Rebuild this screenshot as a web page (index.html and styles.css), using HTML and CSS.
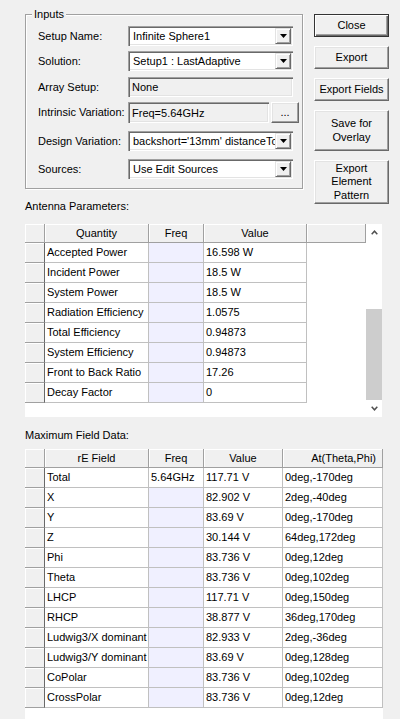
FILE: index.html
```html
<!DOCTYPE html>
<html>
<head>
<meta charset="utf-8">
<title>Antenna Parameters</title>
<link rel="stylesheet" href="styles.css">
</head>
<body>
<div class="top">
  <fieldset class="inputs">
    <legend>Inputs</legend>
    <div class="form">
      <div class="row">
        <span class="lbl">Setup Name:</span>
        <div class="combo"><span class="val">Infinite Sphere1</span><span class="drop"><svg width="7" height="4" viewBox="0 0 7 4"><polygon points="0,0 7,0 3.5,4" fill="#000"/></svg></span></div>
      </div>
      <div class="row">
        <span class="lbl">Solution:</span>
        <div class="combo"><span class="val">Setup1 : LastAdaptive</span><span class="drop"><svg width="7" height="4" viewBox="0 0 7 4"><polygon points="0,0 7,0 3.5,4" fill="#000"/></svg></span></div>
      </div>
      <div class="row mt1">
        <span class="lbl">Array Setup:</span>
        <div class="field ro"><span class="val">None</span></div>
      </div>
      <div class="row tall">
        <span class="lbl">Intrinsic Variation:</span>
        <div class="field ro short"><span class="val">Freq=5.64GHz</span></div>
        <div class="btn dots">...</div>
      </div>
      <div class="row mt3">
        <span class="lbl">Design Variation:</span>
        <div class="combo"><span class="val">backshort='13mm' distanceToSource</span><span class="drop"><svg width="7" height="4" viewBox="0 0 7 4"><polygon points="0,0 7,0 3.5,4" fill="#000"/></svg></span></div>
      </div>
      <div class="row mt3">
        <span class="lbl">Sources:</span>
        <div class="combo"><span class="val">Use Edit Sources</span><span class="drop"><svg width="7" height="4" viewBox="0 0 7 4"><polygon points="0,0 7,0 3.5,4" fill="#000"/></svg></span></div>
      </div>
    </div>
  </fieldset>
  <div class="buttons">
    <div class="btn default b1">Close</div>
    <div class="btn b1">Export</div>
    <div class="btn b1">Export Fields</div>
    <div class="btn multi b2"><span>Save for</span><span>Overlay</span></div>
    <div class="btn multi b3"><span>Export</span><span>Element</span><span>Pattern</span></div>
  </div>
  <div class="section-label first">Antenna Parameters:</div>
</div>

<div class="grid-wrap g1">
  <div class="grid grid1">
    <div class="c h"></div><div class="c h">Quantity</div><div class="c h">Freq</div><div class="c h">Value</div><div class="c h"></div>

    <div class="c rh"></div><div class="c">Accepted Power</div><div class="c f"></div><div class="c">16.598 W</div><div class="blank"></div>
    <div class="c rh"></div><div class="c">Incident Power</div><div class="c f"></div><div class="c">18.5 W</div><div class="blank"></div>
    <div class="c rh"></div><div class="c">System Power</div><div class="c f"></div><div class="c">18.5 W</div><div class="blank"></div>
    <div class="c rh"></div><div class="c">Radiation Efficiency</div><div class="c f"></div><div class="c">1.0575</div><div class="blank"></div>
    <div class="c rh"></div><div class="c">Total Efficiency</div><div class="c f"></div><div class="c">0.94873</div><div class="blank"></div>
    <div class="c rh"></div><div class="c">System Efficiency</div><div class="c f"></div><div class="c">0.94873</div><div class="blank"></div>
    <div class="c rh"></div><div class="c">Front to Back Ratio</div><div class="c f"></div><div class="c">17.26</div><div class="blank"></div>
    <div class="c rh"></div><div class="c">Decay Factor</div><div class="c f"></div><div class="c">0</div><div class="blank"></div>
  </div>
  <div class="vscroll">
    <div class="sarrow"><svg width="7" height="5" viewBox="0 0 7 5"><polyline points="0.7,4.2 3.5,1.2 6.3,4.2" fill="none" stroke="#505050" stroke-width="1.5"/></svg></div>
    <div class="strack"><div class="sthumb"></div></div>
    <div class="sarrow"><svg width="7" height="5" viewBox="0 0 7 5"><polyline points="0.7,0.8 3.5,3.8 6.3,0.8" fill="none" stroke="#505050" stroke-width="1.5"/></svg></div>
  </div>
</div>

<div class="section-label second">Maximum Field Data:</div>

<div class="grid-wrap g2">
  <div class="grid grid2">
    <div class="c h"></div><div class="c h">rE Field</div><div class="c h">Freq</div><div class="c h">Value</div><div class="c h right">At(Theta,Phi)</div>

    <div class="c rh"></div><div class="c">Total</div><div class="c">5.64GHz</div><div class="c">117.71 V</div><div class="c">0deg,-170deg</div>
    <div class="c rh"></div><div class="c">X</div><div class="c f"></div><div class="c">82.902 V</div><div class="c">2deg,-40deg</div>
    <div class="c rh"></div><div class="c">Y</div><div class="c f"></div><div class="c">83.69 V</div><div class="c">0deg,-170deg</div>
    <div class="c rh"></div><div class="c">Z</div><div class="c f"></div><div class="c">30.144 V</div><div class="c">64deg,172deg</div>
    <div class="c rh"></div><div class="c">Phi</div><div class="c f"></div><div class="c">83.736 V</div><div class="c">0deg,12deg</div>
    <div class="c rh"></div><div class="c">Theta</div><div class="c f"></div><div class="c">83.736 V</div><div class="c">0deg,102deg</div>
    <div class="c rh"></div><div class="c">LHCP</div><div class="c f"></div><div class="c">117.71 V</div><div class="c">0deg,150deg</div>
    <div class="c rh"></div><div class="c">RHCP</div><div class="c f"></div><div class="c">38.877 V</div><div class="c">36deg,170deg</div>
    <div class="c rh"></div><div class="c">Ludwig3/X dominant</div><div class="c f"></div><div class="c">82.933 V</div><div class="c">2deg,-36deg</div>
    <div class="c rh"></div><div class="c">Ludwig3/Y dominant</div><div class="c f"></div><div class="c">83.69 V</div><div class="c">0deg,128deg</div>
    <div class="c rh"></div><div class="c">CoPolar</div><div class="c f"></div><div class="c">83.736 V</div><div class="c">0deg,102deg</div>
    <div class="c rh"></div><div class="c">CrossPolar</div><div class="c f"></div><div class="c">83.736 V</div><div class="c">0deg,12deg</div>
  </div>
</div>
</body>
</html>
```

FILE: styles.css
```css
* { box-sizing: border-box; }
html, body { margin: 0; height: 719px; overflow: hidden; }
body {
  width: 400px;
  background: #f0f0f0;
  color: #000;
  font: 11px/13px "Liberation Sans", Arial, sans-serif;
}

/* top area */
.top {
  display: grid;
  grid-template-columns: 278px 75px;
  grid-template-rows: auto auto;
  column-gap: 11px;
  padding: 8px 0 0 25px;
}
.inputs {
  grid-column: 1;
  grid-row: 1;
  min-width: 0;
  margin: 0;
  padding: 0 0 9px 6px;
  border: 1px solid #a0a0a0;
  box-shadow: inset 1px 1px 0 #fff, 1px 1px 0 #fff;
}
.inputs legend {
  padding: 0 2px;
  line-height: 13px;
  background: #f0f0f0;
}
.form {
  display: flex;
  flex-direction: column;
  gap: 5px;
  padding: 5px 0 0 6px;
}
.row {
  display: flex;
  align-items: center;
  height: 20px;
}
.row.tall { height: 21px; }
.row.mt1 { margin-top: 1px; }
.row.mt3 { margin-top: 3px; }
.lbl { width: 90px; flex: none; white-space: nowrap; }

.combo, .field {
  width: 165px;
  height: 20px;
  flex: none;
  display: flex;
  align-items: center;
  padding: 2px;
  background: #fff;
  box-shadow: inset 1px 1px 0 #a0a0a0, inset 2px 2px 0 #696969, inset -1px -1px 0 #fff, inset -2px -2px 0 #e3e3e3;
}
.field.ro { background: #f0f0f0; }
.field.short { width: 141px; height: 21px; }
.val {
  flex: 1;
  min-width: 0;
  overflow: hidden;
  white-space: nowrap;
  padding-left: 2px;
  line-height: 16px;
}
.combo .val { padding-left: 3px; }
.drop {
  flex: none;
  width: 16px;
  height: 16px;
  display: flex;
  align-items: center;
  justify-content: center;
  background: #f0f0f0;
  border: 1px solid;
  border-color: #e3e3e3 #696969 #696969 #e3e3e3;
  box-shadow: inset 1px 1px 0 #fff, inset -1px -1px 0 #a0a0a0;
}

/* buttons */
.buttons {
  grid-column: 2;
  grid-row: 1 / 3;
  display: flex;
  flex-direction: column;
  gap: 9px;
  margin-top: 6px;
}
.btn {
  display: flex;
  align-items: center;
  justify-content: center;
  text-align: center;
  background: #f0f0f0;
  border: 1px solid;
  border-color: #fff #696969 #696969 #fff;
  box-shadow: inset -1px -1px 0 #a0a0a0, inset 1px 1px 0 #e3e3e3;
  white-space: nowrap;
}
.btn.multi { flex-direction: column; }
.btn.multi span { display: block; line-height: 13.5px; }
.btn.default {
  border-color: #333;
  box-shadow: inset 1px 1px 0 #fff, inset -1px -1px 0 #696969, inset -2px -2px 0 #a0a0a0;
}
.b1 { height: 23px; }
.b2 { height: 41px; }
.b3 { height: 44px; }
.btn.dots {
  width: 28px;
  height: 21px;
  margin-left: 2px;
  flex: none;
}

.section-label { white-space: nowrap; }
.section-label.first { grid-column: 1; grid-row: 2; margin-top: 11px; }
.section-label.second { margin: 12px 0 0 25px; }

/* grids */
.grid-wrap {
  display: flex;
  margin-left: 25px;
  background: #fff;
}
.g1 { width: 357px; height: 193px; margin-top: 11px; }
.g2 { width: 358px; height: 270px; margin-top: 7px; }
.grid {
  display: grid;
  align-content: start;
  grid-template-rows: 19px;
  grid-auto-rows: 20px;
}
.grid1 { grid-template-columns: 20px 104px 55px 103px 59px; }
.grid2 { grid-template-columns: 20px 104px 55px 79px 100px; }
.c {
  border-right: 1px solid #c0c0c0;
  border-bottom: 1px solid #c0c0c0;
  padding-left: 2px;
  line-height: 19px;
  white-space: nowrap;
  overflow: hidden;
}
.c.h {
  background: #f0f0f0;
  border-right-color: #a0a0a0;
  border-bottom-color: #a0a0a0;
  box-shadow: inset 1px 1px 0 #fff;
  text-align: center;
  line-height: 18px;
  padding: 0;
}
.c.h.right { text-align: right; padding-right: 6px; }
.c.rh {
  background: #f0f0f0;
  border-right-color: #696969;
  border-bottom-color: #a0a0a0;
  box-shadow: inset 1px 1px 0 #fff;
  padding: 0;
}
.c.f { background: #f0f0ff; }
.blank { background: #fff; }

/* scrollbar */
.vscroll {
  width: 16px;
  display: flex;
  flex-direction: column;
}
.sarrow {
  height: 17px;
  flex: none;
  display: flex;
  align-items: center;
  justify-content: center;
}
.strack {
  flex: 1;
  display: flex;
  flex-direction: column;
  justify-content: flex-end;
}
.sthumb { height: 91px; background: #cdcdcd; }
```
